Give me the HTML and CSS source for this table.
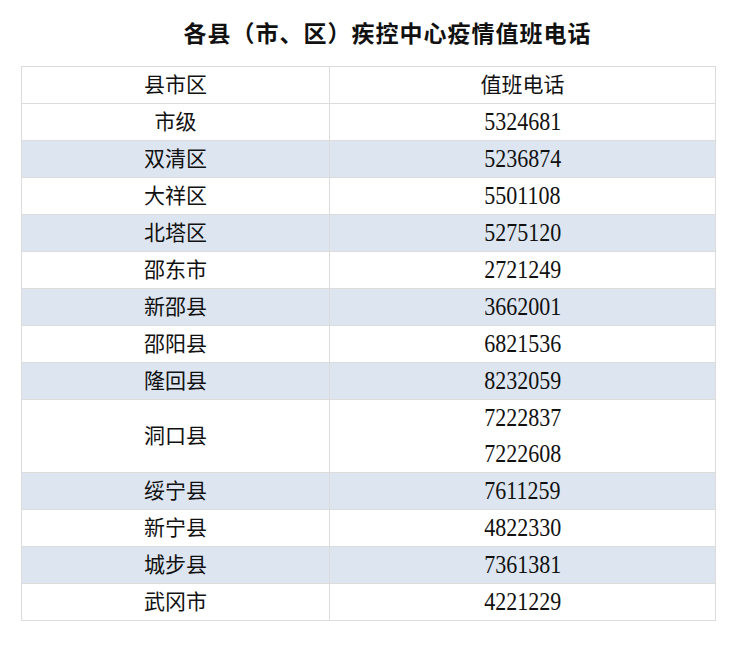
FILE: index.html
```html
<!DOCTYPE html>
<html lang="zh-CN">
<head>
<meta charset="utf-8">
<title>各县（市、区）疾控中心疫情值班电话</title>
<link rel="stylesheet" href="styles.css">
</head>
<body>
<div class="page">
  <h1 class="title">各县（市、区）疾控中心疫情值班电话</h1>
  <table class="duty">
    <thead>
      <tr><th class="c1">县市区</th><th class="c2">值班电话</th></tr>
    </thead>
    <tbody>
      <tr><td>市级</td><td class="n"><span class="num">5324681</span></td></tr>
      <tr class="alt"><td>双清区</td><td class="n"><span class="num">5236874</span></td></tr>
      <tr><td>大祥区</td><td class="n"><span class="num">5501108</span></td></tr>
      <tr class="alt"><td>北塔区</td><td class="n"><span class="num">5275120</span></td></tr>
      <tr><td>邵东市</td><td class="n"><span class="num">2721249</span></td></tr>
      <tr class="alt"><td>新邵县</td><td class="n"><span class="num">3662001</span></td></tr>
      <tr><td>邵阳县</td><td class="n"><span class="num">6821536</span></td></tr>
      <tr class="alt"><td>隆回县</td><td class="n"><span class="num">8232059</span></td></tr>
      <tr class="double"><td>洞口县</td><td class="n multi"><div class="line"><span class="num">7222837</span></div><div class="line"><span class="num">7222608</span></div></td></tr>
      <tr class="alt"><td>绥宁县</td><td class="n"><span class="num">7611259</span></td></tr>
      <tr><td>新宁县</td><td class="n"><span class="num">4822330</span></td></tr>
      <tr class="alt"><td>城步县</td><td class="n"><span class="num">7361381</span></td></tr>
      <tr><td>武冈市</td><td class="n"><span class="num">4221229</span></td></tr>
    </tbody>
  </table>
</div>
</body>
</html>
```
FILE: styles.css
```css
html, body {
  margin: 0;
  padding: 0;
  background: #ffffff;
}
body {
  font-family: "Liberation Serif", "Noto Sans CJK SC", serif;
  color: #111111;
}
.page {
  padding: 0 21px 0 21px;
  width: 695px;
}
.title {
  margin: 0;
  padding-left: 38px;
  height: 66px;
  line-height: 64px;
  text-align: center;
  font-size: 23px;
  font-weight: bold;
  letter-spacing: 1px;
  font-family: "Noto Sans CJK SC", serif;
}
.duty {
  width: 695px;
  border-collapse: collapse;
  table-layout: fixed;
}
.duty th, .duty td {
  border: 1px solid #dcdcdc;
  height: 32px;
  padding: 0 0 4px 0;
  text-align: center;
  vertical-align: middle;
  font-family: "Noto Sans CJK SC", serif;
  font-size: 21px;
  font-weight: normal;
  line-height: 32px;
  overflow: hidden;
}
.duty td.n {
  height: 36px;
  padding: 0;
  line-height: 36px;
}
.duty .c1 { width: 307px; }
.duty .alt td { background: #dde6f0; }
.duty .double td { height: 68px; }
.duty .double td.multi { height: 72px; padding: 0; }
.line { height: 36px; line-height: 36px; overflow: hidden; }
.num {
  display: inline-block;
  vertical-align: top;
  height: 36px;
  font-family: "Liberation Serif", serif;
  font-size: 25px;
  transform: scaleX(0.88);
  line-height: 36px;
}
```
